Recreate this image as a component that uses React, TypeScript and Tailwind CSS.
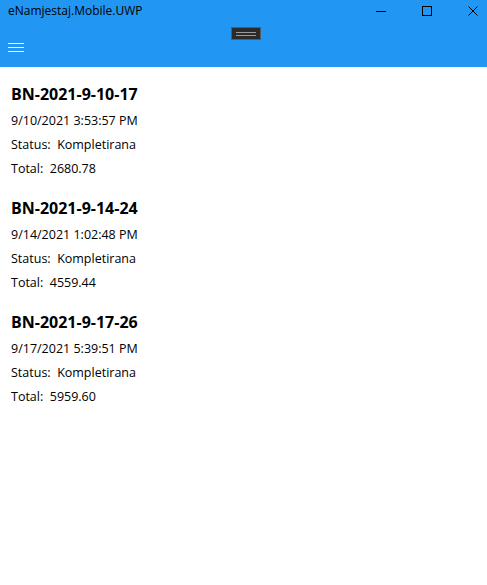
const orders = [
  { code: "BN-2021-9-10-17", date: "9/10/2021 3:53:57 PM", status: "Kompletirana", total: "2680.78" },
  { code: "BN-2021-9-14-24", date: "9/14/2021 1:02:48 PM", status: "Kompletirana", total: "4559.44" },
  { code: "BN-2021-9-17-26", date: "9/17/2021 5:39:51 PM", status: "Kompletirana", total: "5959.60" },
];

export default function App() {
  return (
    <div className="w-[487px] h-[585px] bg-white text-black overflow-hidden" style={{ fontFamily: '"Open Sans", "Noto Sans", sans-serif' }}>
      {/* header: title bar + app bar */}
      <div className="relative h-[67px] bg-[#2196f3]">
        <div className="flex h-[22px] items-center justify-between">
          <span className="pl-2 text-[12px] leading-none">eNamjestaj.Mobile.UWP</span>
          <div className="flex h-full items-center gap-[36px] pr-[9px]">
            <div className="flex h-[10px] w-[10px] items-center">
              <div className="h-px w-[10px] bg-black" />
            </div>
            <div className="h-[10px] w-[10px] border border-black" />
            <svg width="10" height="10" viewBox="0 0 10 10">
              <path d="M0.5 0.5L9.5 9.5M9.5 0.5L0.5 9.5" stroke="black" strokeWidth="1" />
            </svg>
          </div>
        </div>
        {/* debug toolbar pill */}
        <div className="absolute left-[231px] top-[27px] flex h-[13px] w-[30px] flex-col justify-center gap-[2px] border border-[#5a5a5a] bg-[#2b2b2b] px-[4px]">
          <div className="h-px bg-[#9a9a9a]" />
          <div className="h-px bg-[#9a9a9a]" />
        </div>
        <div className="ml-[8px] mt-[21px] flex w-[16px] flex-col gap-[3px]">
          <div className="h-px bg-white" />
          <div className="h-px bg-white" />
          <div className="h-px bg-white" />
        </div>
      </div>

      <div className="flex flex-col gap-[16px] pl-[11px] pt-[16px]">
        {orders.map((o) => (
          <div key={o.code} className="flex flex-col">
            <div className="h-[22px] text-[16px] font-bold leading-[22px]">{o.code}</div>
            <div className="mt-[4px] h-[24px] text-[12.5px] leading-[24px]">{o.date}</div>
            <div className="h-[24px] text-[12.5px] leading-[24px]">Status:&nbsp; {o.status}</div>
            <div className="h-[24px] text-[12.5px] leading-[24px]">Total:&nbsp; {o.total}</div>
          </div>
        ))}
      </div>
    </div>
  );
}
